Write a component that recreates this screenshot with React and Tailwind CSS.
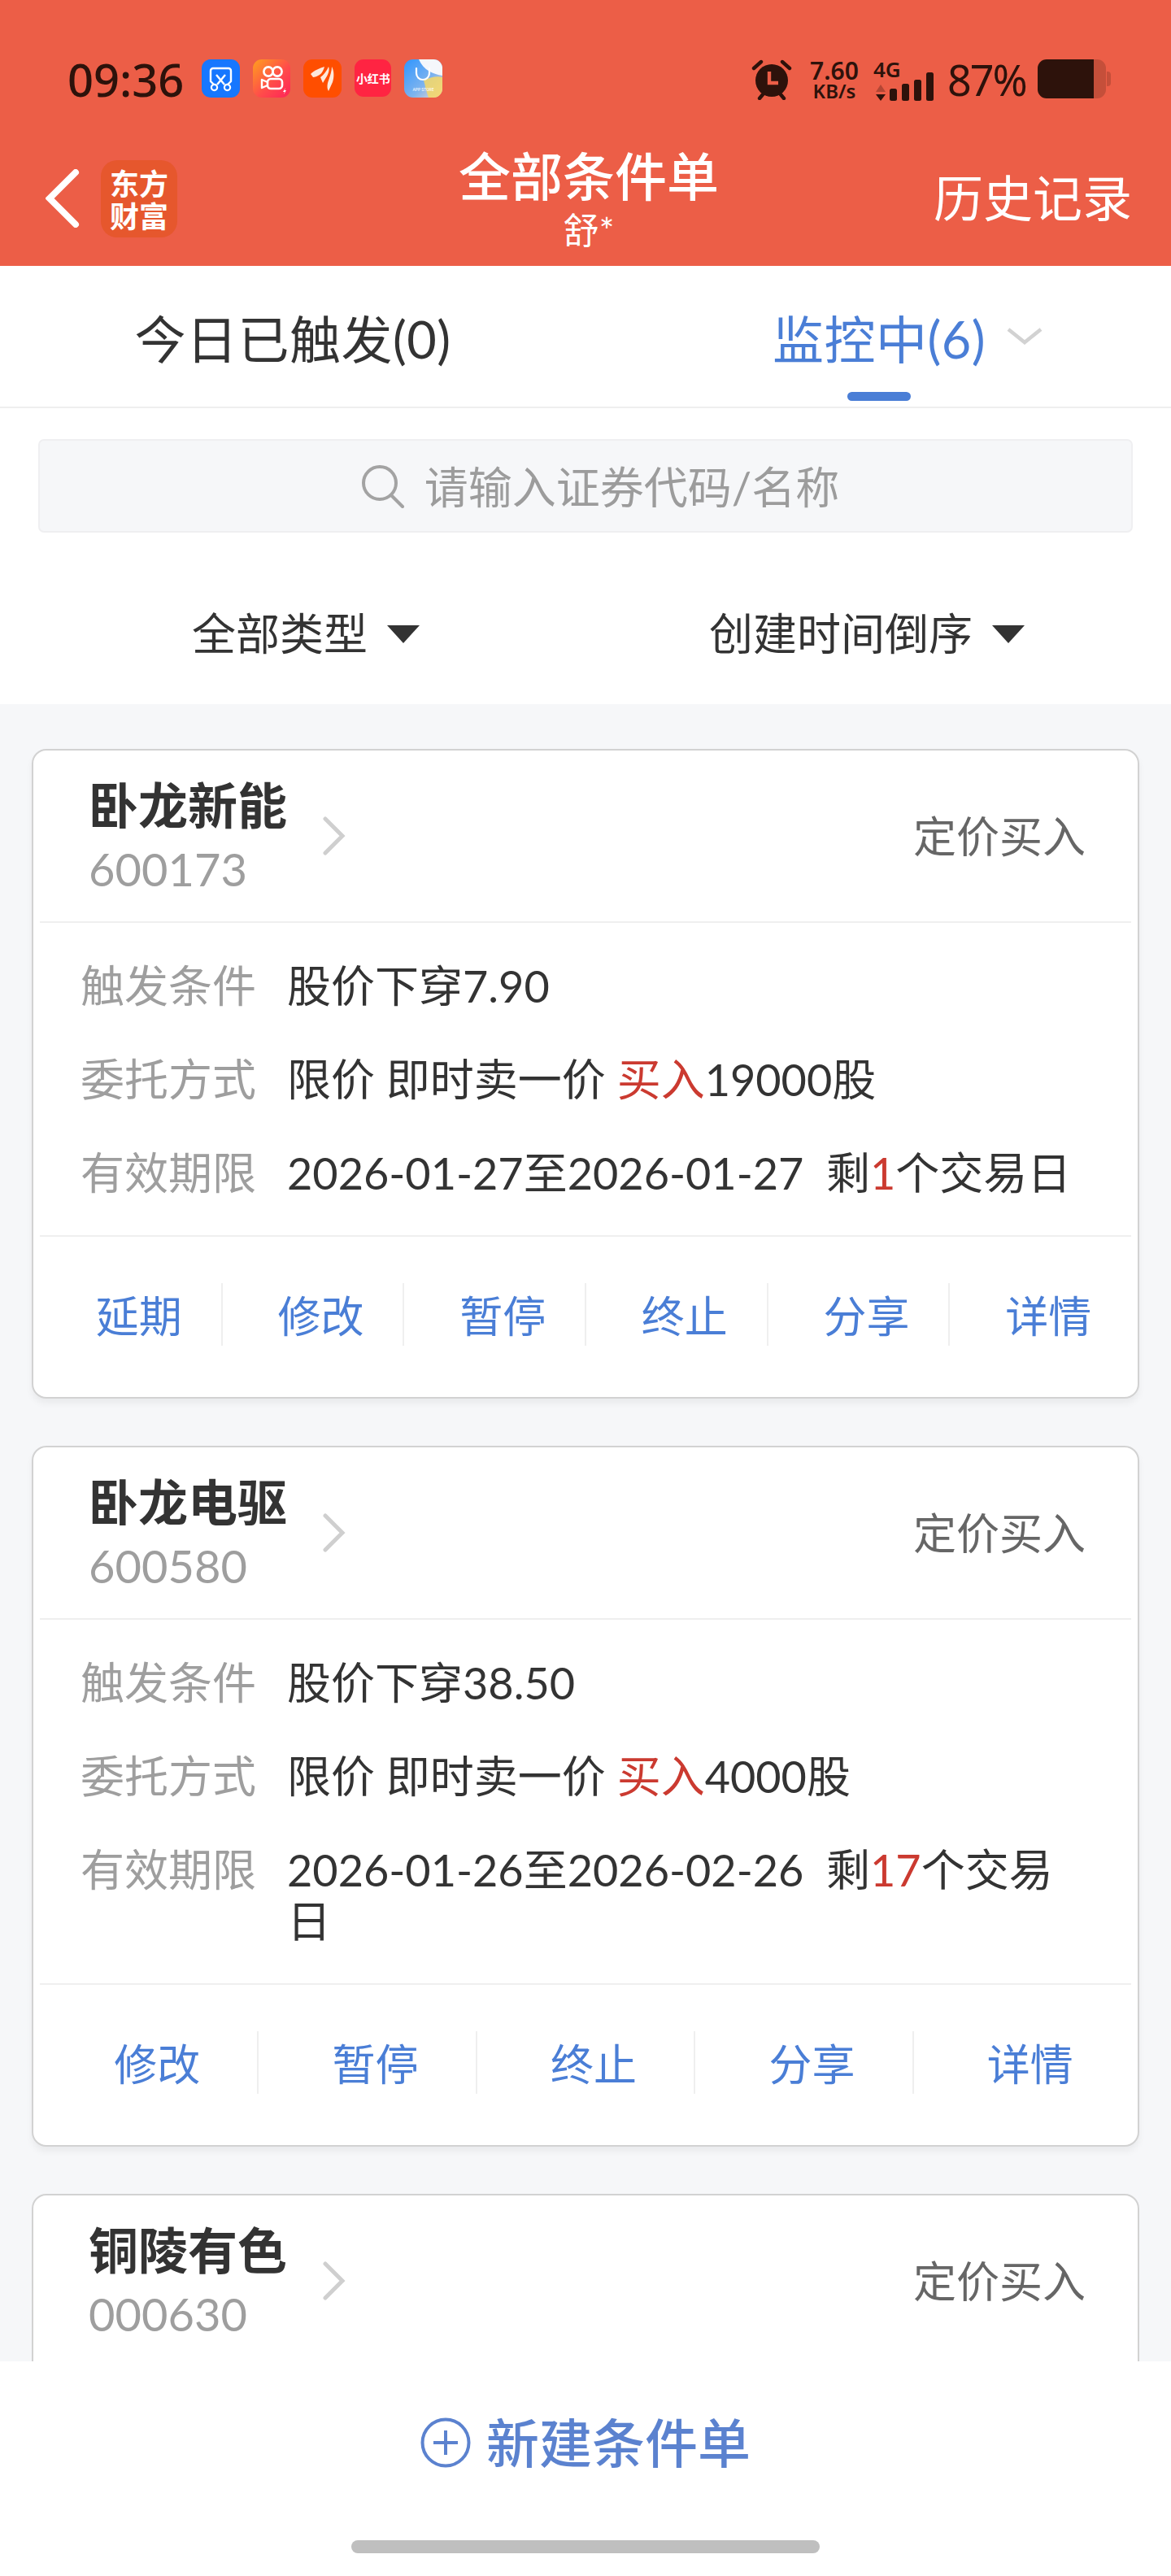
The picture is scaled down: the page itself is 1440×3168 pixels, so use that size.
import React from 'react';

const FONT = 'font-[Lato,"Noto_Sans_CJK_SC",sans-serif]';

const orders = [
  {
    name: '卧龙新能',
    code: '600173',
    condition: '股价下穿7.90',
    shares: '19000股',
    period: '2026-01-27至2026-01-27',
    remain: '1',
    actions: ['延期', '修改', '暂停', '终止', '分享', '详情'],
  },
  {
    name: '卧龙电驱',
    code: '600580',
    condition: '股价下穿38.50',
    shares: '4000股',
    period: '2026-01-26至2026-02-26',
    remain: '17',
    actions: ['修改', '暂停', '终止', '分享', '详情'],
  },
];

// Notification icons in the status bar
const AppIcons = () => (
  <div className="flex items-start gap-[16px] ml-[22px]">
    <svg width="47" height="47" viewBox="0 0 47 47">
      <rect width="47" height="47" rx="11" fill="#1677ff" />
      <path d="M15 31 L11 27 V14 a3 3 0 0 1 3-3 h19 a3 3 0 0 1 3 3 v13 L32 31" fill="none" stroke="#fff" strokeWidth="2.4" strokeLinejoin="round" />
      <path d="M19 31 L29 19 M28 31 L18 19" stroke="#fff" strokeWidth="2.4" />
      <circle cx="15.5" cy="34.5" r="3.6" fill="none" stroke="#fff" strokeWidth="2.2" />
      <circle cx="31.5" cy="34.5" r="3.6" fill="none" stroke="#fff" strokeWidth="2.2" />
    </svg>
    <svg width="46" height="47" viewBox="0 0 46 47">
      <defs>
        <linearGradient id="ks" x1="0" y1="0" x2="1" y2="1">
          <stop offset="0" stopColor="#ffa01e" />
          <stop offset="0.55" stopColor="#ff4d4a" />
          <stop offset="1" stopColor="#ff2358" />
        </linearGradient>
      </defs>
      <rect width="46" height="47" rx="11" fill="url(#ks)" />
      <circle cx="19" cy="15" r="5.6" fill="none" stroke="#fff" strokeWidth="2.6" />
      <circle cx="30" cy="15" r="5.6" fill="none" stroke="#fff" strokeWidth="2.6" />
      <rect x="18" y="24" width="18" height="12" rx="4" fill="none" stroke="#fff" strokeWidth="2.6" />
      <path d="M18 28 L11 25 V35 L18 32" fill="none" stroke="#fff" strokeWidth="2.4" strokeLinejoin="round" />
      <path d="M40 35 L37 40 H39 L38 43 L41 38 H39 Z" fill="#fff" />
    </svg>
    <svg width="47" height="47" viewBox="0 0 47 47">
      <rect width="47" height="47" rx="11" fill="#ff4e00" />
      <path d="M9 18 C14 13 20 11 26 9 C25 13 23 17 20 19 C17 21 14 22 12 22 Z" fill="#fde8dc" />
      <path d="M21 22 C25 19 29 14 31 9 C33 13 30 20 27 24 L24 29 Z" fill="#fde8dc" />
      <path d="M31 26 C33 20 35 14 35 9 C38 14 38 22 36 28 L31 39 C29 36 29 31 31 26 Z" fill="#fde8dc" />
    </svg>
    <div className="w-[45px] h-[46px] rounded-[11px] bg-[#ff2442] flex items-center justify-center text-white text-[14px] leading-none font-bold whitespace-nowrap font-['Noto_Sans_CJK_SC',sans-serif]">
      小红书
    </div>
    <svg width="47" height="47" viewBox="0 0 47 47">
      <defs>
        <linearGradient id="as" x1="0" y1="0" x2="1" y2="1">
          <stop offset="0" stopColor="#2f95ff" />
          <stop offset="0.6" stopColor="#7fb4ee" />
          <stop offset="1" stopColor="#f4d7c9" />
        </linearGradient>
      </defs>
      <rect width="47" height="47" rx="11" fill="url(#as)" />
      <path d="M18 0 C24 14 36 18 47 20 V11 A11 11 0 0 0 36 0 Z" fill="#f5f7fb" />
      <path d="M24 26 C32 22 40 20 47 22 V36 A11 11 0 0 1 36 47 H30 C27 40 26 32 24 26 Z" fill="#f6d866" opacity="0.85" />
      <path d="M15 11 V17 a8 8 0 0 0 16 0 V11" fill="none" stroke="#fff" strokeWidth="2.2" strokeLinecap="round" />
      <text x="23.5" y="39" textAnchor="middle" fontSize="5" fill="#fff" fontFamily="Roboto, sans-serif">APP STORE</text>
    </svg>
  </div>
);

const StatusIcons = () => (
  <div className="flex items-start text-[#2d120b] font-['Noto_Sans',sans-serif]">
    <svg width="50" height="50" viewBox="0 0 50 50" className="mr-[22px]">
      <circle cx="25" cy="26" r="20" fill="#2d120b" />
      <path d="M3 11 L12 3 M47 11 L38 3" stroke="#2d120b" strokeWidth="4.4" strokeLinecap="round" />
      <path d="M10 48 L15 42 M40 48 L35 42" stroke="#2d120b" strokeWidth="4.4" strokeLinecap="round" />
      <path d="M22 15 V29 H33" fill="none" stroke="#ec5e47" strokeWidth="4.4" />
    </svg>
    <div className="w-[60px] mr-[18px] flex flex-col items-center font-semibold">
      <span className="text-[30px] leading-[28px]">7.60</span>
      <span className="text-[24px] leading-[22px]">KB/s</span>
    </div>
    <div className="w-[74px] mr-[17px] flex flex-col">
      <span className="text-[26px] leading-[24px] font-semibold h-[25px]">4G</span>
      <svg width="74" height="48" viewBox="0 0 74 48" className="-mt-[9px]">
        <path d="M3 24 H15 L9 15 Z" fill="#2d120b" opacity="0.3" />
        <path d="M3 27 H15 L9 35 Z" fill="#2d120b" />
        <rect x="20" y="20" width="9" height="15" rx="2.5" fill="#2d120b" />
        <rect x="35" y="14" width="9" height="21" rx="2.5" fill="#2d120b" />
        <rect x="50" y="9" width="9" height="26" rx="2.5" fill="#2d120b" />
        <rect x="65" y="0" width="9" height="35" rx="2.5" fill="#2d120b" />
      </svg>
    </div>
    <span className="text-[52px] leading-[50px] w-[111px] tracking-[-2px]">87%</span>
    <svg width="90" height="48" viewBox="0 0 90 48">
      <path d="M69 0 h4 a11 11 0 0 1 11 11 v26 a11 11 0 0 1 -11 11 h-4 Z" fill="#2d120b" opacity="0.2" />
      <path d="M85 15 h1 a4 4 0 0 1 4 4 v10 a4 4 0 0 1 -4 4 h-1 Z" fill="#2d120b" opacity="0.2" />
      <path d="M11 0 H69 V48 H11 A11 11 0 0 1 0 37 V11 A11 11 0 0 1 11 0 Z" fill="#2d120b" />
    </svg>
  </div>
);

const Header = () => (
  <header className="h-[327px] bg-[#ec5e47] flex flex-col shrink-0">
    <div className="flex items-start justify-between h-[50px] mt-[73px] pl-[83px] pr-[74px]">
      <div className="flex items-start">
        <span className="text-[56px] leading-[48px] font-medium text-[#2d120b] font-['Noto_Sans',sans-serif]">09:36</span>
        <AppIcons />
      </div>
      <StatusIcons />
    </div>
    <div className="grid grid-cols-[1fr_auto_1fr] items-center mt-[56px] pl-[56px] pr-[48px]">
      <div className="flex items-center">
        <svg width="42" height="72" viewBox="0 0 42 72">
          <path d="M37 4 L5 36 L37 68" fill="none" stroke="#fff" strokeWidth="8" strokeLinecap="round" />
        </svg>
        <div className="w-[94px] h-[95px] ml-[26px] rounded-[20px] bg-[#e6572d] flex flex-col items-center justify-center text-[#fff] text-[36px] leading-[40px] font-bold font-['Noto_Sans_CJK_SC',sans-serif]">
          <span>东方</span>
          <span>财富</span>
        </div>
      </div>
      <div className="flex flex-col items-center text-white">
        <span className="text-[64px] leading-[76px] font-medium">全部条件单</span>
        <span className="text-[44px] leading-[52px] pt-[2px]">舒*</span>
      </div>
      <span className="text-white text-[61px] leading-[72px] text-right">历史记录</span>
    </div>
  </header>
);

const Tabs = () => (
  <div className="grid grid-cols-2 h-[175px] border-b-2 border-[#efefef] shrink-0">
    <div className="flex justify-center pt-[48px]">
      <span className="text-[63px] leading-[84px] tracking-[0.5px] text-[#333333]">今日已触发(0)</span>
    </div>
    <div className="flex flex-col items-center pt-[48px] pl-[2px]">
      <span className="relative text-[63px] leading-[84px] tracking-[0.5px] text-[#4a7ed6]">
        监控中(6)
        <svg width="44" height="22" viewBox="0 0 44 22" className="absolute left-[calc(100%+26px)] top-[27px]">
          <path d="M2 3 L22 19 L42 3" fill="none" stroke="#d2d2d2" strokeWidth="4.5" />
        </svg>
      </span>
      <div className="w-[78px] h-[11px] mt-[23px] rounded-full bg-[#4a7ed6]" />
    </div>
  </div>
);

const SearchBar = () => (
  <div className="mt-[38px] mx-[47px] h-[115px] shrink-0 rounded-[7px] bg-[#f6f7f9] border-2 border-[#efeff1] flex items-center justify-center gap-[24px] pl-[36px]">
    <svg width="54" height="54" viewBox="0 0 54 54">
      <circle cx="23" cy="23" r="20" fill="none" stroke="#a3a3a3" strokeWidth="4" />
      <path d="M37 38 L51 52" stroke="#a3a3a3" strokeWidth="4" strokeLinecap="round" />
    </svg>
    <span className="text-[54px] leading-[64px] pt-[4px] text-[#9c9c9c]">请输入证券代码/名称</span>
  </div>
);

const Triangle = () => (
  <svg width="40" height="22" viewBox="0 0 40 22" className="ml-[24px]">
    <path d="M0 0 H40 L20 22 Z" fill="#333333" />
  </svg>
);

const Filters = () => (
  <div className="grid grid-cols-[872px_1fr] h-[172px] mt-[39px] bg-white shrink-0 items-center">
    <div className="flex items-center pl-[236px]">
      <span className="text-[54px] leading-[64px] text-[#333333]">全部类型</span>
      <Triangle />
    </div>
    <div className="flex items-center">
      <span className="text-[54px] leading-[64px] text-[#333333]">创建时间倒序</span>
      <Triangle />
    </div>
  </div>
);

const CardHead = ({ name, code }) => (
  <div className="flex items-center justify-between h-[210px] pl-[68px] pr-[64px]">
    <div className="flex items-center">
      <div className="flex flex-col pt-[2px]">
        <span className="text-[61px] leading-[72px] font-bold text-[#333333]">{name}</span>
        <span className="text-[56px] leading-[68px] mt-[8px] text-[#9e9e9e]">{code}</span>
      </div>
      <svg width="28" height="48" viewBox="0 0 28 48" className="ml-[44px]">
        <path d="M3 3 L24 24 L3 45" fill="none" stroke="#cfcfcf" strokeWidth="5" strokeLinecap="round" />
      </svg>
    </div>
    <span className="text-[53px] leading-[64px] pt-[2px] text-[#666666]">定价买入</span>
  </div>
);

const Row = ({ label, children }) => (
  <div className="flex">
    <span className="w-[254px] shrink-0 text-[54px] leading-[63px] text-[#9e9e9e]">{label}</span>
    <span className="text-[54px] leading-[63px] text-[#333333] whitespace-pre-wrap">{children}</span>
  </div>
);

const OrderCard = ({ order }) => (
  <div className="rounded-[18px] border-2 border-[#d2d2d2] bg-white shadow-[0_6px_8px_rgba(0,0,0,0.05)] shrink-0">
    <CardHead name={order.name} code={order.code} />
    <div className="mx-[8px] h-[2px] bg-[#efefef]" />
    <div className="flex flex-col gap-[52px] pt-[46px] pb-[45px] pl-[58px] pr-[69px]">
      <Row label="触发条件">{order.condition}</Row>
      <Row label="委托方式">
        限价 即时卖一价 <span className="text-[#cb3a30]">买入</span>
        {order.shares}
      </Row>
      <Row label="有效期限">
        {order.period}{'  '}剩<span className="text-[#cb3a30]">{order.remain}</span>个交易日
      </Row>
    </div>
    <div className="mx-[8px] h-[2px] bg-[#efefef]" />
    <div className="flex mx-[9px] pt-[57px] pb-[63px]">
      {order.actions.map((action, i) => (
        <div
          key={action}
          className={`flex-1 h-[77px] flex items-center justify-center pl-[20px] pt-[4px] text-[53px] leading-[64px] text-[#4a7ed6] ${i < order.actions.length - 1 ? 'border-r-2 border-[#efefef]' : ''}`}
        >
          {action}
        </div>
      ))}
    </div>
  </div>
);

const Footer = () => (
  <footer className="h-[264px] bg-white shrink-0 flex flex-col items-center">
    <div className="flex items-center gap-[19px] mt-[62px]">
      <svg width="62" height="62" viewBox="0 0 62 62">
        <circle cx="31" cy="31" r="28.5" fill="none" stroke="#5b82cf" strokeWidth="4" />
        <path d="M31 16 V46 M16 31 H46" stroke="#5b82cf" strokeWidth="4" />
      </svg>
      <span className="text-[65px] leading-[76px] font-medium text-[#5b82cf]">新建条件单</span>
    </div>
    <div className="w-[576px] h-[16px] mt-[82px] rounded-full bg-[#bfbfbf]" />
  </footer>
);

const App = () => {
  return (
    <div className={`w-[1440px] h-[3168px] flex flex-col overflow-hidden bg-white ${FONT}`}>
      <Header />
      <Tabs />
      <SearchBar />
      <Filters />
      <div className="flex-1 min-h-0 overflow-hidden bg-[#f6f7f9] flex flex-col gap-[58px] pt-[55px] px-[39px]">
        {orders.map(order => (
          <OrderCard key={order.code} order={order} />
        ))}
        {/* Third card runs under the footer, only its head shows */}
        <div className="rounded-[18px] border-2 border-[#d2d2d2] bg-white shrink-0 h-[400px]">
          <CardHead name="铜陵有色" code="000630" />
        </div>
      </div>
      <Footer />
    </div>
  );
};

export default App;
